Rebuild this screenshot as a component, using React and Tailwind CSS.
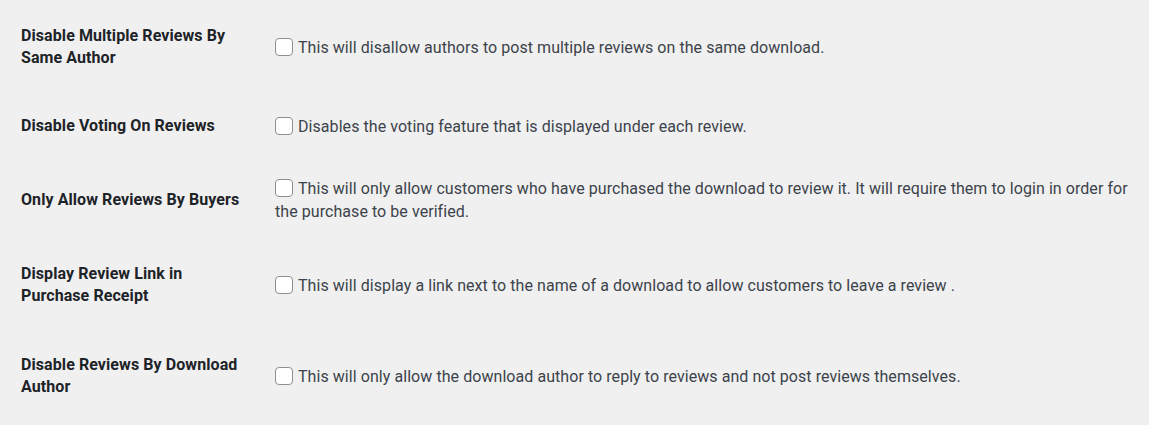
import React from 'react';

const rows = [
  {
    label: 'Disable Multiple Reviews By Same Author',
    desc: 'This will disallow authors to post multiple reviews on the same download.',
    h: 'h-[92px]',
  },
  {
    label: 'Disable Voting On Reviews',
    desc: 'Disables the voting feature that is displayed under each review.',
    h: 'h-[66px]',
  },
  {
    label: 'Only Allow Reviews By Buyers',
    desc: 'This will only allow customers who have purchased the download to review it. It will require them to login in order for the purchase to be verified.',
    h: 'h-[82px]',
  },
  {
    label: 'Display Review Link in Purchase Receipt',
    desc: 'This will display a link next to the name of a download to allow customers to leave a review .',
    h: 'h-[88px]',
  },
  {
    label: 'Disable Reviews By Download Author',
    desc: 'This will only allow the download author to reply to reviews and not post reviews themselves.',
    h: 'h-[94px]',
  },
];

export default function App() {
  return (
    <div className="min-h-screen bg-[#f0f0f1] pt-[1px] pl-[21px] pr-[10px]" style={{ fontFamily: 'Roboto, "Noto Sans", sans-serif' }}>
      {rows.map((row) => (
        <div key={row.label} className={`flex items-center ${row.h}`}>
          <div className="w-[222px] shrink-0 text-[16px] tracking-[0.08px] leading-[22px] font-bold text-[#1d2327]">
            {row.label}
          </div>
          <div className="flex-1 pl-[32px] text-[16px] tracking-[0.06px] leading-[23px] text-[#3c434a]">
            <span className="inline-block w-[18px] h-[18px] align-[-3px] mr-[5px] rounded-[4px] border border-[#8c8f94] bg-white" />
            {row.desc}
          </div>
        </div>
      ))}
    </div>
  );
}
